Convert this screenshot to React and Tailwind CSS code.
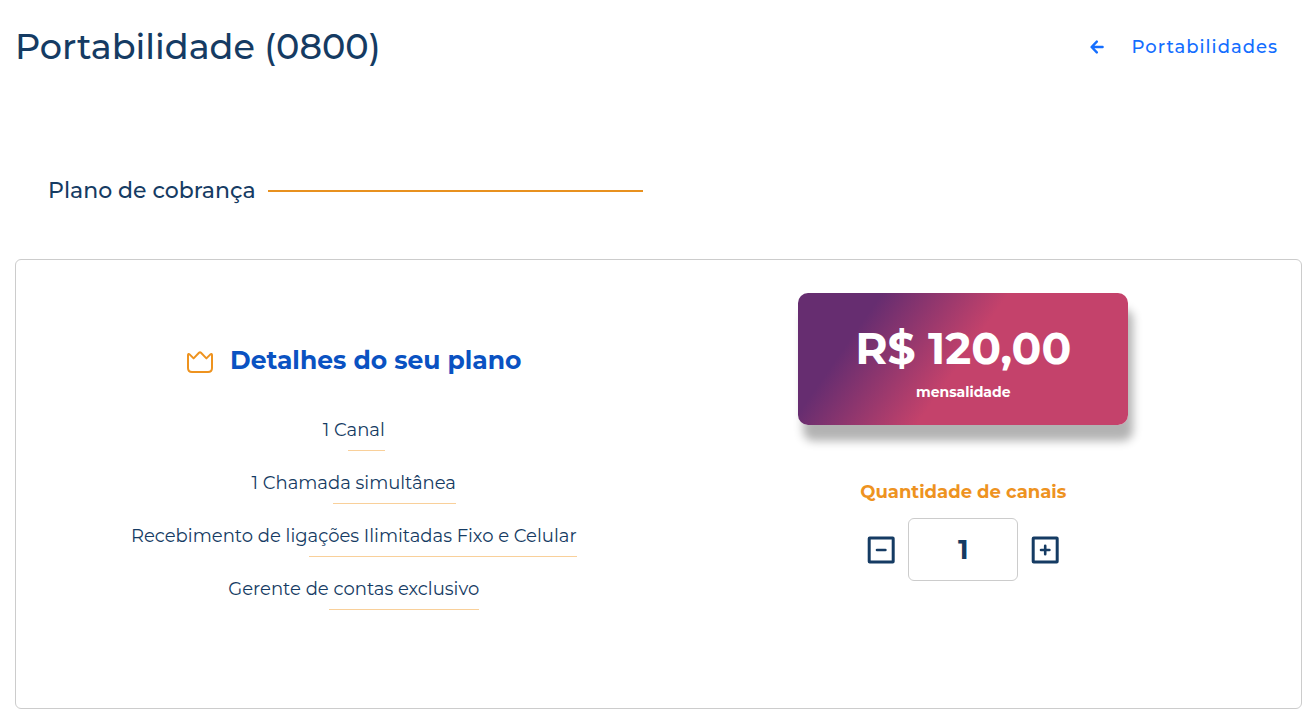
import { useState } from 'react'

const PLAN_ITEMS = [
  '1 Canal',
  '1 Chamada simultânea',
  'Recebimento de ligações Ilimitadas Fixo e Celular',
  'Gerente de contas exclusivo',
]

const PRICE_PER_CHANNEL = 120

const formatPrice = (value) =>
  value.toFixed(2).replace('.', ',').replace(/\B(?=(\d{3})+(?!\d))/g, '.')

function ArrowLeftIcon() {
  return (
    <svg viewBox="0 0 14 14" className="size-3.5" fill="none" stroke="currentColor" strokeWidth="2.4" strokeLinecap="round" strokeLinejoin="round" aria-hidden="true">
      <path d="M6.8 1.6 L1.6 7 L6.8 12.4 M2 7 H12.6" />
    </svg>
  )
}

function CrownIcon() {
  return (
    <svg viewBox="0 0 28 24" className="h-6 w-7" fill="none" stroke="currentColor" strokeWidth="2" strokeLinejoin="round" aria-hidden="true">
      <path d="M2 5 C2 3.8 2.8 3.6 3.6 4.4 L7.6 8.4 L13 2.8 Q14 1.8 15 2.8 L20.4 8.4 L24.4 4.4 C25.2 3.6 26 3.8 26 5 V18 Q26 22 22 22 H6 Q2 22 2 18 Z" />
    </svg>
  )
}

function SquareIcon({ plus }) {
  return (
    <svg viewBox="0 0 28 28" className="size-7" fill="none" stroke="currentColor" aria-hidden="true">
      <rect x="2.2" y="2" width="24" height="24" rx="0.5" strokeWidth="3" />
      <path d={plus ? 'M10 14 H18.4 M14.2 9.8 V18.2' : 'M10 14 H18.4'} strokeWidth="2.6" strokeLinecap="round" />
    </svg>
  )
}

export default function App() {
  const [channels, setChannels] = useState(1)

  const onChange = (value) => {
    const next = parseInt(value, 10)
    setChannels(Number.isNaN(next) || next < 1 ? 1 : next)
  }

  return (
    <main className="bg-white pr-3.5 pb-4 pl-[15px] font-['Montserrat','Inter',sans-serif] text-[#153b63]">
      <header className="flex h-[94px] items-center justify-between pr-6">
        <h1 className="text-[35px] font-medium">Portabilidade (0800)</h1>
        <a href="#portabilidades" className="flex items-center gap-7 text-[18px] leading-6 font-medium tracking-[1px] text-[#146eff]">
          <ArrowLeftIcon />
          Portabilidades
        </a>
      </header>

      <div className="mt-[81px] grid grid-cols-2 px-[33px]">
        <div className="flex items-center gap-3 pr-4">
          <h2 className="text-[22px] leading-8 font-medium">Plano de cobrança</h2>
          <span className="h-0.5 flex-1 bg-[#e8911f]" />
        </div>
      </div>

      <section className="mt-[52px] grid grid-cols-2 rounded-md border border-[#cccccc] px-[33px] pt-[33px] pb-[98px]">
        <div className="flex flex-col items-center pt-[47px]">
          <div className="flex items-center gap-4">
            <span className="pt-1 text-[#ee931f]">
              <CrownIcon />
            </span>
            <h3 className="text-[25px] leading-10 font-bold text-[#0a52c2]">Detalhes do seu plano</h3>
          </div>
          <ul className="mt-8 flex flex-col items-center gap-3.5 text-[18px]">
            {PLAN_ITEMS.map((item) => (
              <li key={item} className="flex flex-col items-end">
                <span className="pb-0.5 leading-9">{item}</span>
                <span className="h-px w-3/5 bg-[#f9d09a]" />
              </li>
            ))}
          </ul>
        </div>

        <div className="flex flex-col items-center">
          <div className="flex h-[132px] w-[330px] flex-col items-center justify-center rounded-[10px] bg-[linear-gradient(125deg,#662d70_20%,#c4426b_50%)] pt-2.5 font-bold text-white shadow-[5px_16px_10px_rgba(0,0,0,0.3)]">
            <p className="text-[44px] leading-14">R$ {formatPrice(PRICE_PER_CHANNEL * channels)}</p>
            <p className="text-[14px] leading-8">mensalidade</p>
          </div>
          <label htmlFor="channels" className="mt-[51px] text-[18px] leading-8 font-bold text-[#ee931f]">
            Quantidade de canais
          </label>
          <div className="mt-2.5 flex items-center gap-[13px]">
            <button type="button" aria-label="Diminuir" onClick={() => onChange(channels - 1)}>
              <SquareIcon />
            </button>
            <input
              id="channels"
              value={channels}
              inputMode="numeric"
              onChange={(e) => onChange(e.target.value)}
              className="h-[63px] w-[110px] rounded-md border border-[#cccccc] bg-white text-center text-[27px] font-bold"
            />
            <button type="button" aria-label="Aumentar" onClick={() => onChange(channels + 1)}>
              <SquareIcon plus />
            </button>
          </div>
        </div>
      </section>
    </main>
  )
}
